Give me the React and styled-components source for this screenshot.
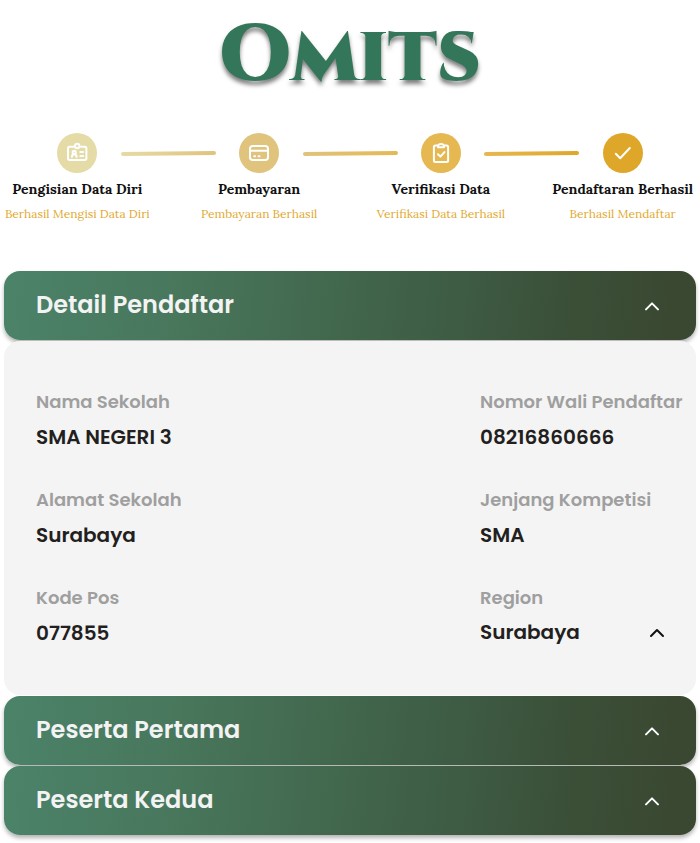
import React from "react";
import styled, { createGlobalStyle } from "styled-components";

const GlobalStyle = createGlobalStyle`
  *, *::before, *::after { box-sizing: border-box; }
  body {
    margin: 0;
    background: #fff;
    overflow: hidden;
    font-family: Poppins, Inter, "Noto Sans", sans-serif;
  }
`;

const Page = styled.main`
  width: 700px;
  height: 843px;
  overflow: hidden;
  display: flex;
  flex-direction: column;
`;

const LogoBar = styled.header`
  height: 133px;
  flex: none;
  display: flex;
  justify-content: center;
`;

const LogoText = styled.h1`
  margin: 0;
  font-family: Cinzel, "Cinzel Decorative", "Liberation Serif", serif;
  font-weight: 900;
  font-size: 80px;
  line-height: 112px;
  color: #34765a;
  text-shadow: 0 4px 4px rgba(0, 0, 0, 0.5);
`;

const Track = styled.div`
  height: 40px;
  flex: none;
  display: flex;
  align-items: center;
  justify-content: center;
  gap: 23.4px;
`;

const StepCircle = styled.div`
  flex: none;
  width: 40px;
  height: 40px;
  border-radius: 50%;
  background: ${({ $color }) => $color};
  display: grid;
  place-items: center;
`;

const ConnectorArt = styled.svg`
  flex: none;
  width: 95px;
  height: 8px;
`;

const StepIcon = styled.svg`
  width: 24px;
  height: 24px;
  fill: none;
  stroke: #fff;
  stroke-width: 2;
  stroke-linecap: round;
  stroke-linejoin: round;
`;

const StepLabels = styled.div`
  flex: none;
  height: 98px;
  padding-top: 5px;
  display: grid;
  grid-template-columns: repeat(4, 181.8px);
  justify-content: center;
  font-family: Lora, "Liberation Serif", serif;
`;

const StepLabel = styled.div`
  display: flex;
  flex-direction: column;
  align-items: center;
  white-space: nowrap;
`;

const StepTitle = styled.div`
  font-size: 14px;
  font-weight: 700;
  line-height: 22px;
  color: #111;
`;

const StepNote = styled.div`
  margin-top: 3px;
  font-size: 12px;
  line-height: 22px;
  color: #dfa92f;
`;

const Accordion = styled.section`
  padding: 0 4px;
  display: flex;
  flex-direction: column;
  gap: 1px;
`;

const AccordionHeader = styled.div`
  height: 69px;
  padding: 0 32px;
  border-radius: 16px;
  display: flex;
  align-items: center;
  justify-content: space-between;
  background: linear-gradient(
    97deg,
    #4b8369 0%,
    #48775c 25%,
    #446c52 41%,
    #41664b 50%,
    #3e5b44 66%,
    #3b5038 80%,
    #3a4731 98%
  );
  box-shadow: 0 3px 4px rgba(0, 0, 0, 0.3);
`;

const HeaderTitle = styled.h2`
  margin: 0 0 2px;
  font-size: 24px;
  line-height: 36px;
  font-weight: 600;
  color: #f3f3f3;
`;

const Chevron = styled.svg`
  flex: none;
  width: 24px;
  height: 24px;
  fill: none;
  stroke: ${({ $color }) => $color};
  stroke-width: 2;
  stroke-linecap: round;
  stroke-linejoin: round;
`;

const Panel = styled.div`
  height: 354px;
  padding: 47px 0 0 32px;
  border-radius: 16px;
  background: #f4f4f4;
  display: grid;
  grid-template-columns: 444px 1fr;
  grid-auto-rows: 98px;
  align-content: start;
`;

const Field = styled.div`
  white-space: nowrap;
`;

const FieldLabel = styled.div`
  font-size: 18px;
  line-height: 27px;
  font-weight: 600;
  color: #9f9f9f;
`;

const FieldValue = styled.div`
  height: 30px;
  margin-top: ${({ $select }) => ($select ? 6 : 7)}px;
  padding-right: 27px;
  display: flex;
  align-items: center;
  justify-content: space-between;
  font-size: 20px;
  line-height: 30px;
  font-weight: 600;
  color: #231f20;
`;

const icons = {
  id: (
    <StepIcon viewBox="0 0 24 24">
      <path d="M9.6 5.8H4.6a1.6 1.6 0 0 0-1.6 1.6v9.9a1.6 1.6 0 0 0 1.6 1.6h15.2a1.6 1.6 0 0 0 1.6-1.6V7.4a1.6 1.6 0 0 0-1.6-1.6h-5" />
      <circle cx="12.2" cy="5" r="2.2" />
      <circle cx="9.2" cy="11.3" r="1.6" />
      <path d="M6.8 15.8c.2-1.6 1-2.5 2.4-2.5s2.2.9 2.4 2.5M15.3 11h2.8M15.3 15h2.8" />
    </StepIcon>
  ),
  card: (
    <StepIcon viewBox="0 0 24 24">
      <rect x="3" y="5" width="18" height="14" rx="2.8" />
      <path d="M3 9.8h18M7.2 15.2h.9M11.6 15.2h.9" />
    </StepIcon>
  ),
  clipboard: (
    <StepIcon viewBox="0 0 24 24">
      <path d="M8.8 4.4H6.4a1.5 1.5 0 0 0-1.5 1.5v13.6a1.5 1.5 0 0 0 1.5 1.5h11.2a1.5 1.5 0 0 0 1.5-1.5V5.9a1.5 1.5 0 0 0-1.5-1.5h-2.4" />
      <path d="M9 4.6c.5-1.2 1.6-1.7 3-1.7s2.5.5 3 1.7v1.6H9z" />
      <path d="m9 13.3 2.4 2.3 4.1-4.5" />
    </StepIcon>
  ),
  check: (
    <StepIcon viewBox="0 0 24 24">
      <path d="m4.8 12.8 4.4 4.4L18.8 7" />
    </StepIcon>
  ),
};

const steps = [
  { icon: "id", color: "#e5dba6", title: "Pengisian Data Diri", note: "Berhasil Mengisi Data Diri" },
  { icon: "card", color: "#e0c37d", title: "Pembayaran", note: "Pembayaran Berhasil" },
  { icon: "clipboard", color: "#e6b852", title: "Verifikasi Data", note: "Verifikasi Data Berhasil" },
  { icon: "check", color: "#dfa729", title: "Pendaftaran Berhasil", note: "Berhasil Mendaftar" },
];

const fields = [
  { label: "Nama Sekolah", value: "SMA NEGERI 3" },
  { label: "Nomor Wali Pendaftar", value: "08216860666" },
  { label: "Alamat Sekolah", value: "Surabaya" },
  { label: "Jenjang Kompetisi", value: "SMA" },
  { label: "Kode Pos", value: "077855" },
  { label: "Region", value: "Surabaya", select: true },
];

function Connector({ id, from, to }) {
  return (
    <ConnectorArt viewBox="0 0 95 8">
      <defs>
        <linearGradient id={id} gradientUnits="userSpaceOnUse" x1="0" y1="0" x2="95" y2="0">
          <stop stopColor={from} />
          <stop offset="1" stopColor={to} />
        </linearGradient>
      </defs>
      <path d="M2 4.9 93 4" stroke={`url(#${id})`} strokeWidth="4" strokeLinecap="round" />
    </ConnectorArt>
  );
}

function ChevronUp({ color, d = "m6 15.4 6-6 6 6" }) {
  return (
    <Chevron viewBox="0 0 24 24" $color={color}>
      <path d={d} />
    </Chevron>
  );
}

function SectionHeader({ title }) {
  return (
    <AccordionHeader>
      <HeaderTitle>{title}</HeaderTitle>
      <ChevronUp color="#fff" />
    </AccordionHeader>
  );
}

export default function App() {
  return (
    <>
      <GlobalStyle />
      <Page>
        <LogoBar><LogoText>Omits</LogoText></LogoBar>
        <Track>
          {steps.map((step, i) => (
            <React.Fragment key={step.icon}>
              {i > 0 && <Connector id={`connector-${i}`} from={steps[i - 1].color} to={step.color} />}
              <StepCircle $color={step.color}>{icons[step.icon]}</StepCircle>
            </React.Fragment>
          ))}
        </Track>
        <StepLabels>
          {steps.map((step) => (
            <StepLabel key={step.title}>
              <StepTitle>{step.title}</StepTitle>
              <StepNote>{step.note}</StepNote>
            </StepLabel>
          ))}
        </StepLabels>
        <Accordion>
          <SectionHeader title="Detail Pendaftar" />
          <Panel>
            {fields.map((field) => (
              <Field key={field.label}>
                <FieldLabel>{field.label}</FieldLabel>
                <FieldValue $select={field.select}>
                  {field.value}
                  {field.select && <ChevronUp color="#111" d="m6 16 6-6 6 6" />}
                </FieldValue>
              </Field>
            ))}
          </Panel>
          <SectionHeader title="Peserta Pertama" />
          <SectionHeader title="Peserta Kedua" />
        </Accordion>
      </Page>
    </>
  );
}
